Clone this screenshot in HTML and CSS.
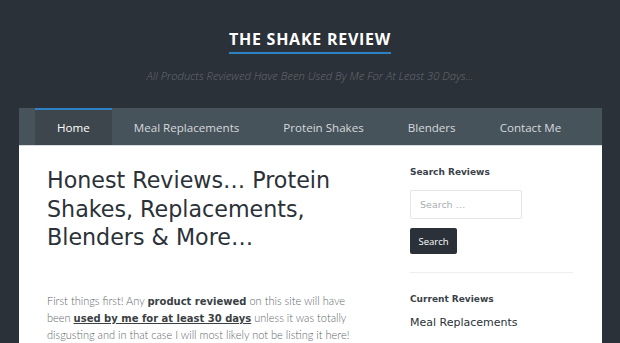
FILE: index.html
```html
<!DOCTYPE html>
<html lang="en">
<head>
<meta charset="utf-8">
<title>The Shake Review</title>
<link rel="stylesheet" href="styles.css">
</head>
<body>
<header class="site-header">
  <h1 class="site-title">THE SHAKE REVIEW</h1>
  <p class="tagline">All Products Reviewed Have Been Used By Me For At Least 30 Days…</p>
</header>
<div class="page">
  <nav class="main-nav">
    <a class="nav-item active" href="#">Home</a>
    <a class="nav-item" href="#">Meal Replacements</a>
    <a class="nav-item" href="#">Protein Shakes</a>
    <a class="nav-item" href="#">Blenders</a>
    <a class="nav-item" href="#">Contact Me</a>
  </nav>
  <div class="main">
    <article class="content">
      <h2 class="entry-title">Honest Reviews… Protein Shakes, Replacements, Blenders &amp; More…</h2>
      <p class="intro">First things first! Any <strong>product reviewed</strong> on this site will have been <strong class="ul">used by me for at least 30 days</strong> unless it was totally disgusting and in that case I will most likely not be listing it here!</p>
    </article>
    <aside class="sidebar">
      <h3 class="widget-title">Search Reviews</h3>
      <form class="search-form">
        <input class="search-field" type="text" placeholder="Search …">
        <button class="search-btn" type="button">Search</button>
      </form>
      <hr class="sep">
      <h3 class="widget-title">Current Reviews</h3>
      <div class="cat-link">Meal Replacements</div>
    </aside>
  </div>
</div>
</body>
</html>
```
FILE: styles.css
```css
html, body {
  margin: 0;
  padding: 0;
}
body {
  background: #2b3138;
  font-family: "Open Sans", "DejaVu Sans", sans-serif;
  height: 343px;
  overflow: hidden;
}
.site-header {
  text-align: center;
  padding-top: 28px;
  height: 80px;
  box-sizing: border-box;
}
.site-title {
  display: inline-block;
  margin: 0;
  font-size: 16px;
  line-height: 20px;
  font-weight: 700;
  letter-spacing: 0.75px;
  color: #ffffff;
  padding-bottom: 3px;
  border-bottom: 2px solid #2e82c4;
}
.tagline {
  margin: 14px 0 0;
  font-size: 11.2px;
  line-height: 16px;
  font-style: italic;
  font-weight: 300;
  color: #646c74;
}
.page {
  margin: 28px 18px 0 19px;
}
.main-nav {
  display: flex;
  height: 38px;
  background: #47535b;
  padding-left: 16px;
  border-bottom: 1px solid #d9dcde;
  box-sizing: border-box;
}
.nav-item {
  display: flex;
  align-items: center;
  padding: 0 22px;
  font-size: 11.6px;
  color: #d5d9dc;
  text-decoration: none;
  border-top: 2px solid transparent;
}
.nav-item.active {
  background: #3d464d;
  border-top-color: #2e82c4;
  color: #ffffff;
}
.main {
  display: flex;
  background: #ffffff;
  padding: 0 29px 0 28px;
  height: 200px;
}
.content {
  width: 324px;
}
.entry-title {
  margin: 20px 0 40px;
  font-family: "DejaVu Sans", sans-serif;
  font-size: 22.2px;
  line-height: 28.5px;
  font-weight: 400;
  color: #2b3138;
}
.intro {
  margin: 0;
  font-family: "Lato", sans-serif;
  font-weight: 300;
  font-size: 11px;
  line-height: 17.4px;
  color: #62676c;
}
.intro strong {
  font-family: "DejaVu Sans", sans-serif;
  font-weight: 700;
  font-size: 10px;
  line-height: 12px;
  color: #3a3f44;
}
.intro .ul {
  text-decoration: underline;
}
.sidebar {
  flex: 1;
  margin-left: 39px;
  padding-top: 19px;
}
.widget-title {
  margin: 0;
  font-family: "DejaVu Sans", sans-serif;
  font-size: 9px;
  line-height: 14px;
  font-weight: 700;
  color: #3a4148;
}
.search-form {
  display: flex;
  flex-direction: column;
  align-items: flex-start;
  margin-top: 11px;
}
.search-field {
  width: 112px;
  height: 29px;
  box-sizing: border-box;
  border: 1px solid #e4e6e8;
  border-radius: 2px;
  padding: 0 9px;
  font-family: "DejaVu Sans", sans-serif;
  font-size: 9.5px;
  color: #333;
  outline: none;
}
.search-field::placeholder {
  color: #a9adb1;
}
.search-btn {
  margin-top: 9px;
  width: 47px;
  height: 26px;
  border: none;
  border-radius: 2px;
  background: #2b3138;
  color: #ffffff;
  font-family: "Open Sans", sans-serif;
  font-size: 9.5px;
  padding: 0;
}
.sep {
  margin: 18px 0 19px;
  border: none;
  border-top: 1px solid #eceeef;
}
.cat-link {
  margin-top: 10px;
  font-family: "DejaVu Sans", sans-serif;
  font-size: 11px;
  line-height: 14px;
  color: #2b3138;
}
```
